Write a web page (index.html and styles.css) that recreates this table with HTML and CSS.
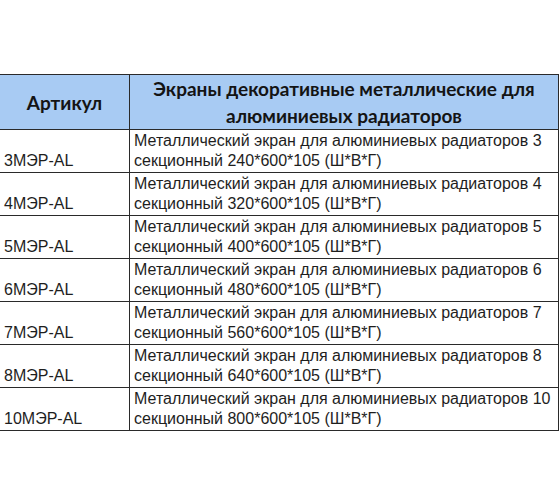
FILE: index.html
```html
<!DOCTYPE html>
<html lang="ru">
<head>
<meta charset="utf-8">
<link rel="stylesheet" href="styles.css">
</head>
<body>
<div class="page">
<table class="sheet">
  <colgroup><col class="c1"><col class="c2"></colgroup>
  <thead>
    <tr class="head">
      <th class="h-art">Артикул</th>
      <th class="h-name">Экраны декоративные металлические для алюминиевых радиаторов</th>
    </tr>
  </thead>
  <tbody>
    <tr><td class="art">3МЭР-AL</td><td class="name">Металлический экран для алюминиевых радиаторов 3 секционный 240*600*105 (Ш*В*Г)</td></tr>
    <tr><td class="art">4МЭР-AL</td><td class="name">Металлический экран для алюминиевых радиаторов 4 секционный 320*600*105 (Ш*В*Г)</td></tr>
    <tr><td class="art">5МЭР-AL</td><td class="name">Металлический экран для алюминиевых радиаторов 5 секционный 400*600*105 (Ш*В*Г)</td></tr>
    <tr><td class="art">6МЭР-AL</td><td class="name">Металлический экран для алюминиевых радиаторов 6 секционный 480*600*105 (Ш*В*Г)</td></tr>
    <tr><td class="art">7МЭР-AL</td><td class="name">Металлический экран для алюминиевых радиаторов 7 секционный 560*600*105 (Ш*В*Г)</td></tr>
    <tr><td class="art">8МЭР-AL</td><td class="name">Металлический экран для алюминиевых радиаторов 8 секционный 640*600*105 (Ш*В*Г)</td></tr>
    <tr><td class="art">10МЭР-AL</td><td class="name">Металлический экран для алюминиевых радиаторов 10 секционный 800*600*105 (Ш*В*Г)</td></tr>
  </tbody>
</table>
</div>
</body>
</html>
```
FILE: styles.css
```css
html, body {
  margin: 0;
  padding: 0;
  background: #ffffff;
}
.page {
  padding-top: 74px;
  width: 560px;
  height: 504px;
  box-sizing: border-box;
}
.sheet {
  border-collapse: collapse;
  table-layout: fixed;
  width: 559px;
  margin-left: -1px;
  font-family: "Liberation Sans", Arial, sans-serif;
  color: #1e1e1e;
}
.c1 { width: 130px; }
.c2 { width: 429px; }
.sheet th, .sheet td {
  border: 1px solid #2a2a2a;
  padding: 0;
}
.head th {
  background: #a8cbf3;
  height: 53px;
  font-family: Lato, "Open Sans", sans-serif;
  font-weight: 700;
  font-size: 19px;
  line-height: 27px;
  color: #141414;
  text-align: center;
  vertical-align: middle;
}
.h-name {
  padding: 0 8px;
}
.sheet td {
  height: 41px;
  font-size: 16px;
  line-height: 20px;
}
.art {
  vertical-align: bottom;
  padding-left: 4px !important;
  padding-bottom: 1px !important;
}
.name {
  vertical-align: top;
  padding-left: 4px !important;
  padding-top: 1px !important;
}
```
